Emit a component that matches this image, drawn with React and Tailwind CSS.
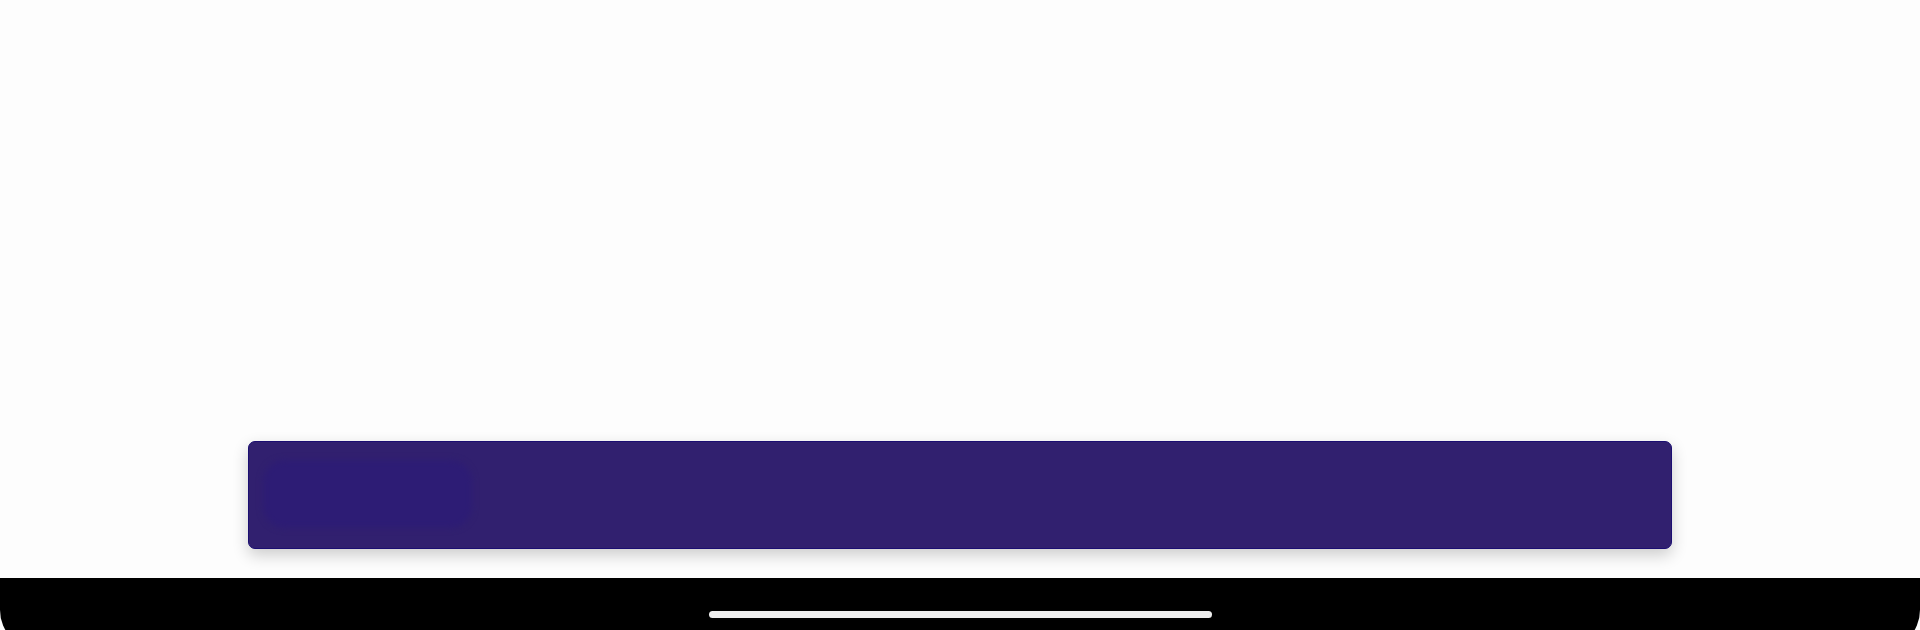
import React from 'react';

// Bottom sheet banner with a loading placeholder, above a device home bar
export default function App() {
  return (
    <div className="relative w-full h-[630px] bg-[#fdfdfd] overflow-hidden flex flex-col">
      {/* Content area */}
      <div className="flex-1 flex flex-col justify-end items-center pb-[29px]">
        <div className="w-[1424px] h-[108px] rounded-[7px] border border-[#1b0e72] bg-[#31206f] shadow-[0_6px_16px_rgba(0,0,0,0.2)] flex items-start px-[14px] pt-[18px]">
          {/* skeleton placeholder */}
          <div className="w-[209px] h-[68px] rounded-[22px] bg-[#2d1c75] blur-[3px]"></div>
        </div>
      </div>

      {/* Device home bar */}
      <div className="h-[52px] shrink-0 relative">
        <div className="absolute inset-x-0 top-0 h-[72px] bg-black rounded-b-[40px] flex justify-center">
          <div className="mt-[33px] w-[503px] h-[7px] rounded-full bg-[#eeeeee]"></div>
        </div>
      </div>
    </div>
  );
}
